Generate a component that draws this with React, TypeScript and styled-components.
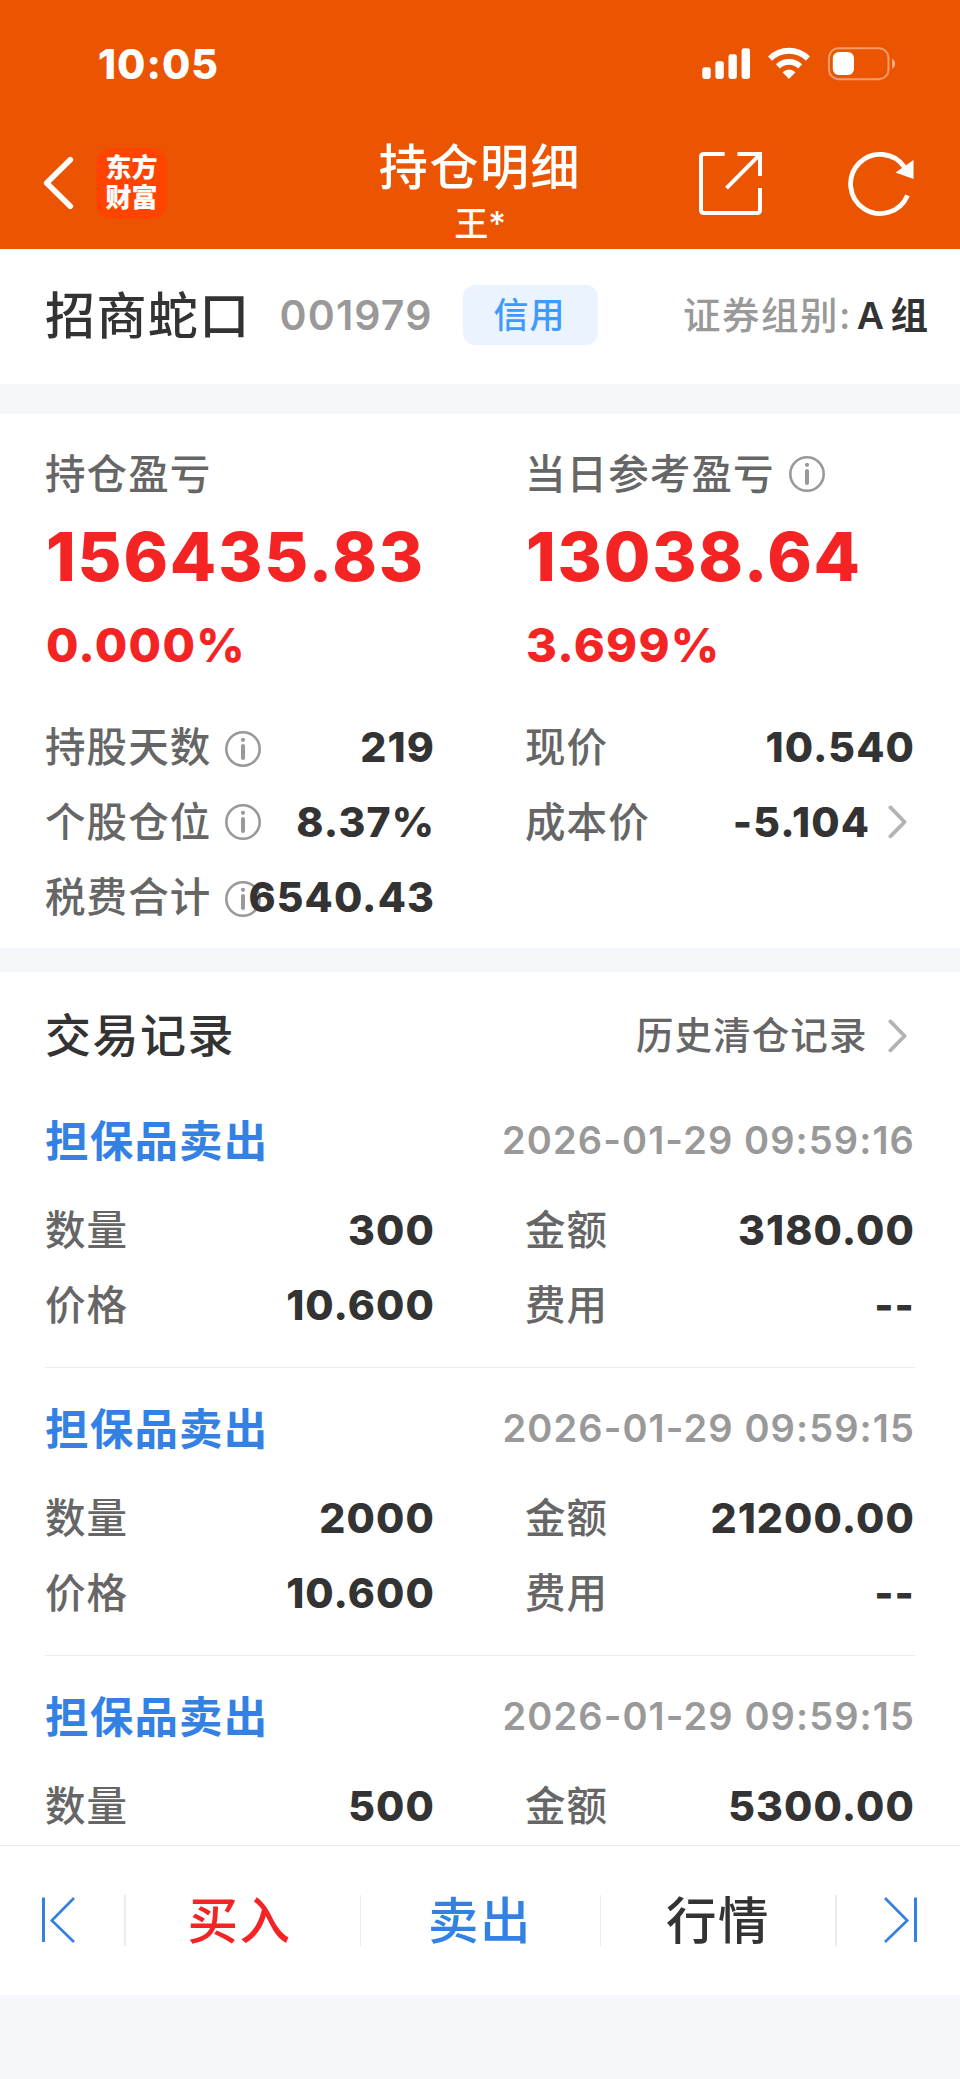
import React from "react";
import styled, { createGlobalStyle } from "styled-components";

const GlobalStyle = createGlobalStyle`
  * { box-sizing: border-box; }
  body {
    margin: 0;
    background: #f6f7fa;
    font-family: Inter, "Noto Sans CJK SC", sans-serif;
    color: #333333;
  }
  svg { display: block; flex: none; }
`;

const Screen = styled.div`
  width: 960px;
  height: 2079px;
  display: flex;
  flex-direction: column;
  overflow: hidden;
`;

/* ---------- header ---------- */

const Header = styled.header`
  flex: none;
  height: 249px;
  background: #eb5502;
  color: #ffffff;
`;

const StatusBar = styled.div`
  height: 128px;
  display: flex;
  align-items: center;
  justify-content: space-between;
  padding: 0 64px 0 98px;
`;

const Clock = styled.span`
  font-size: 41px;
  line-height: 60px;
  font-weight: 800;
  letter-spacing: 1px;
`;

const NavBar = styled.div`
  height: 121px;
  display: grid;
  grid-template-columns: 1fr auto 1fr;
  padding: 0 45px 0 41px;
`;

const NavSide = styled.div<{ $end?: boolean }>`
  height: ${(p) => (p.$end ? 112 : 110)}px;
  display: flex;
  align-items: center;
  justify-content: ${(p) => (p.$end ? "flex-end" : "flex-start")};
  gap: ${(p) => (p.$end ? "84px" : "21px")};
`;

const AppLogo = styled.div`
  width: 71px;
  height: 71px;
  padding-bottom: 4px;
  border-radius: 15px;
  background: #ff4400;
  display: flex;
  flex-direction: column;
  align-items: center;
  justify-content: center;
  font: 900 26px/30px "Noto Sans CJK SC", sans-serif;
`;

const TitleBlock = styled.div`
  display: flex;
  flex-direction: column;
  align-items: center;
  padding: 10px 0 0 4px;
`;

const Title = styled.h1`
  margin: 0;
  font-size: 49px;
  line-height: 60px;
  font-weight: 500;
  letter-spacing: 1.6px;
`;

const Subtitle = styled.span`
  font-size: 34px;
  line-height: 51px;
  font-weight: 500;
`;

/* ---------- stock name row ---------- */

const StockRow = styled.section`
  flex: none;
  height: 135px;
  padding: 0 32px 3px 45px;
  background: #ffffff;
  display: flex;
  align-items: center;
`;

const StockName = styled.span`
  padding-top: 2px;
  font-size: 50px;
  line-height: 66px;
  font-weight: 500;
  letter-spacing: 1.4px;
`;

const StockCode = styled.span`
  margin-left: 29px;
  width: 154px;
  font-size: 41px;
  line-height: 60px;
  font-weight: 600;
  letter-spacing: 1.1px;
  color: #999999;
`;

const Tag = styled.span`
  margin-left: auto;
  width: 135px;
  height: 60px;
  border-radius: 12px;
  background: #ebf3ff;
  color: #3d9aff;
  font-size: 35px;
  line-height: 61px;
  font-weight: 500;
  letter-spacing: 1px;
  padding-right: 2px;
  text-align: center;
`;

const Group = styled.span`
  width: 245px;
  margin-left: 85px;
  padding-top: 1px;
  display: flex;
  justify-content: space-between;
  white-space: nowrap;
  font-size: 37.5px;
  line-height: 60px;
  word-spacing: -3px;
`;

const GroupLabel = styled.span`
  color: #999999;
  font-weight: 500;
  letter-spacing: 1.5px;
`;

const GroupName = styled.span`
  font-weight: 600;
`;

/* ---------- summary ---------- */

const Band = styled.div<{ $height: number }>`
  flex: none;
  height: ${(p) => p.$height}px;
  background: #f6f7fa;
`;

const Summary = styled.section`
  flex: none;
  height: 534px;
  padding: 20px 45px 0;
  background: #ffffff;
`;

const Columns = styled.div`
  display: grid;
  grid-template-columns: 390px 390px;
  column-gap: 90px;
`;

const Profit = styled.div`
  display: flex;
  flex-direction: column;
  height: 275px;
`;

const ProfitAmount = styled.span`
  padding-left: 1px;
  font-size: 67.5px;
  line-height: 86px;
  font-weight: 800;
  letter-spacing: 1.8px;
  color: #f52424;
`;

const ProfitRate = styled.span`
  padding-left: 1px;
  font-size: 47px;
  line-height: 89px;
  font-weight: 800;
  letter-spacing: 1.3px;
  color: #f52424;
`;

const Row = styled.div`
  height: 75px;
  display: flex;
  align-items: center;
  justify-content: space-between;
`;

const Label = styled.span`
  display: flex;
  align-items: center;
  height: 80px;
  padding-top: 2px;
  font-size: 40.5px;
  line-height: 60px;
  font-weight: 500;
  letter-spacing: 1.1px;
  white-space: nowrap;
  color: #666666;
`;

const InfoSlot = styled.span<{ $shift: number }>`
  margin: 0 -36px 0 14px;
  transform: translateY(${(p) => p.$shift}px);
`;

const Value = styled.span`
  position: relative;
  margin-left: auto;
  font-size: 41px;
  line-height: 60px;
  font-weight: 800;
  letter-spacing: 1.1px;
  white-space: nowrap;
`;

const ChevronSlot = styled.span<{ $gap: number }>`
  margin: 0 8px 0 ${(p) => p.$gap}px;
`;

/* ---------- records ---------- */

const Records = styled.section`
  flex: 1;
  min-height: 0;
  overflow: hidden;
  padding: 0 45px;
  background: #ffffff;
`;

const RecordsHead = styled.div`
  height: 108px;
  padding-top: 18px;
  display: flex;
  align-items: center;
  justify-content: space-between;
`;

const SectionTitle = styled.h2`
  margin: 0;
  font-size: 46px;
  line-height: 60px;
  font-weight: 500;
  letter-spacing: 1.5px;
`;

const HistoryLink = styled.a`
  display: flex;
  align-items: center;
  padding-top: 2px;
  font-size: 37.5px;
  line-height: 60px;
  font-weight: 500;
  letter-spacing: 1.1px;
  color: #666666;
`;

const RecordItem = styled.article`
  height: 288px;
  padding-top: 8px;
  border-bottom: 1px solid #ededed;
`;

const RecordTop = styled.div`
  height: 104px;
  display: flex;
  align-items: center;
  justify-content: space-between;
`;

const Action = styled.span`
  padding-top: 2px;
  font-size: 43.5px;
  line-height: 60px;
  font-weight: 700;
  letter-spacing: 1.2px;
  color: #3381e3;
`;

const Time = styled.span`
  font-size: 38px;
  line-height: 60px;
  font-weight: 600;
  letter-spacing: 1.1px;
  color: #999999;
  white-space: nowrap;
`;

/* ---------- bottom bar ---------- */

const BottomBar = styled.nav`
  flex: none;
  height: 150px;
  border-top: 1px solid #ebebeb;
  background: #ffffff;
  display: flex;
  align-items: center;
  padding-bottom: 1px;
`;

const PageButton = styled.button<{ $last?: boolean }>`
  flex: none;
  width: 124px;
  height: 51px;
  border: 0;
  background: none;
  display: flex;
  align-items: center;
  justify-content: ${(p) => (p.$last ? "flex-end" : "flex-start")};
  padding: ${(p) => (p.$last ? "0 44px 0 0" : "0 0 0 42px")};
`;

const Divider = styled.i<{ $w: number }>`
  flex: none;
  width: ${(p) => p.$w}px;
  height: 51px;
  background: #ececec;
`;

const TradeButton = styled.button<{ $color: string; $w: number; $nudge: number }>`
  flex: none;
  width: ${(p) => p.$w}px;
  border: 0;
  padding: 2px ${(p) => p.$nudge}px 0 0;
  background: none;
  font-family: inherit;
  font-size: 50.5px;
  line-height: 70px;
  font-weight: 500;
  letter-spacing: 1.5px;
  color: ${(p) => p.$color};
`;

const HomeArea = styled.footer`
  flex: none;
  height: 84px;
  background: #f6f7fa;
`;

/* ---------- icons ---------- */

const StatusIcons = () => (
  <svg width="196" height="34" viewBox="700 47 196 34" fill="#fff">
    <rect x="702.3" y="67.2" width="8.4" height="11.8" rx="2.4" />
    <rect x="715.4" y="61.2" width="8.4" height="17.8" rx="2.4" />
    <rect x="728.5" y="54.3" width="8.4" height="24.7" rx="2.4" />
    <rect x="741.6" y="48.2" width="8.4" height="30.8" rx="2.4" />
    <g fill="none" stroke="#fff" strokeWidth="5.8">
      <path d="M770.1 58.6A26.7 26.7 0 0 1 807.9 58.6" />
      <path d="M777.9 66.4A15.7 15.7 0 0 1 800.1 66.4" />
    </g>
    <path d="M789 79L782.5 72.3Q789 66.6 795.5 72.3Z" />
    <rect x="829" y="48.3" width="59.5" height="30.9" rx="9.5" fill="none" stroke="#fff" strokeOpacity=".42" strokeWidth="2" />
    <rect x="832.8" y="52.1" width="21.2" height="22.9" rx="6" />
    <path d="M892 58.7Q895.2 60.5 895.2 63.7T892 68.7Z" fillOpacity=".5" />
  </svg>
);

const BackIcon = () => (
  <svg width="34" height="56" viewBox="41 155 34 56" fill="none" stroke="#fff" strokeWidth="5.6" strokeLinecap="round" strokeLinejoin="round">
    <path d="M70.3 159.8L46.7 183L70.3 206.2" />
  </svg>
);

const ShareIcon = () => (
  <svg width="64" height="64" viewBox="699 152 64 64" fill="none" stroke="#fff" strokeWidth="4">
    <path d="M724.6 154H704Q701 154 701 157V210Q701 213 704 213H757Q760 213 760 210V188" />
    <path d="M737.5 154H760V176" />
    <path d="M726.5 188.2L759 155.4" />
  </svg>
);

const RefreshIcon = () => (
  <svg width="68" height="68" viewBox="847 150 68 68" fill="none">
    <path d="M907.5 195.4A29.6 29.6 0 1 1 904.8 167.5" stroke="#fff" strokeWidth="4.8" />
    <path d="M913.5 160V179L895.5 172.5Z" fill="#fff" />
  </svg>
);

const InfoIcon = () => (
  <svg width="36" height="36" viewBox="0 0 36 36" fill="none" stroke="#999">
    <circle cx="18" cy="18" r="16.7" strokeWidth="2.6" />
    <circle cx="18" cy="8.8" r="2.1" fill="#999" stroke="none" />
    <path d="M18 15V27" strokeWidth="4" strokeLinecap="round" />
  </svg>
);

const Chevron = () => (
  <svg width="19" height="34" viewBox="0 0 19 34" fill="none" stroke="#b3b3b3" strokeWidth="3.8" strokeLinecap="round" strokeLinejoin="round">
    <path d="M2.4 2.4L16.6 17L2.4 31.3" />
  </svg>
);

const PageIcon = ({ flip }: { flip?: boolean }) => (
  <svg width="34" height="46" viewBox="0 0 34 46" fill="none" stroke="#3381e3" strokeWidth="3">
    <g transform={flip ? "matrix(-1 0 0 1 34 0)" : undefined}>
      <path d="M1.5 .5V45" />
      <path d="M32 1L9.8 23.5L32 45" strokeWidth="2.7" />
    </g>
  </svg>
);

/* ---------- composition ---------- */

type FieldProps = { label: string; value: string; info?: number; link?: boolean };

const Field = ({ label, value, info, link }: FieldProps) => (
  <Row>
    <Label>
      {label}
      {info !== undefined && (
        <InfoSlot $shift={info}>
          <InfoIcon />
        </InfoSlot>
      )}
    </Label>
    <Value>{value}</Value>
    {link && (
      <ChevronSlot $gap={18}>
        <Chevron />
      </ChevronSlot>
    )}
  </Row>
);

type TradeRecord = { time: string; qty: string; amount: string; price?: string };

const records: TradeRecord[] = [
  { time: "2026-01-29 09:59:16", qty: "300", amount: "3180.00", price: "10.600" },
  { time: "2026-01-29 09:59:15", qty: "2000", amount: "21200.00", price: "10.600" },
  { time: "2026-01-29 09:59:15", qty: "500", amount: "5300.00" },
];

export default function App() {
  return (
    <Screen>
      <GlobalStyle />
      <Header>
        <StatusBar>
          <Clock>10:05</Clock>
          <StatusIcons />
        </StatusBar>
        <NavBar>
          <NavSide>
            <BackIcon />
            <AppLogo>
              <span>东方</span>
              <span>财富</span>
            </AppLogo>
          </NavSide>
          <TitleBlock>
            <Title>持仓明细</Title>
            <Subtitle>王*</Subtitle>
          </TitleBlock>
          <NavSide $end>
            <ShareIcon />
            <RefreshIcon />
          </NavSide>
        </NavBar>
      </Header>

      <StockRow>
        <StockName>招商蛇口</StockName>
        <StockCode>001979</StockCode>
        <Tag>信用</Tag>
        <Group>
          <GroupLabel>证券组别:</GroupLabel>
          <GroupName>A 组</GroupName>
        </Group>
      </StockRow>

      <Band $height={30} />

      <Summary>
        <Columns>
          <Profit>
            <Label>持仓盈亏</Label>
            <ProfitAmount>156435.83</ProfitAmount>
            <ProfitRate>0.000%</ProfitRate>
          </Profit>
          <Profit>
            <Label>
              当日参考盈亏
              <InfoSlot $shift={-1}>
                <InfoIcon />
              </InfoSlot>
            </Label>
            <ProfitAmount>13038.64</ProfitAmount>
            <ProfitRate>3.699%</ProfitRate>
          </Profit>
        </Columns>
        <Columns>
          <div>
            <Field label="持股天数" value="219" info={1} />
            <Field label="个股仓位" value="8.37%" info={-1} />
            <Field label="税费合计" value="6540.43" info={1} />
          </div>
          <div>
            <Field label="现价" value="10.540" />
            <Field label="成本价" value="-5.104" link />
          </div>
        </Columns>
      </Summary>

      <Band $height={24} />

      <Records>
        <RecordsHead>
          <SectionTitle>交易记录</SectionTitle>
          <HistoryLink>
            历史清仓记录
            <ChevronSlot $gap={20.5}>
              <Chevron />
            </ChevronSlot>
          </HistoryLink>
        </RecordsHead>
        {records.map((r, i) => (
          <RecordItem key={i}>
            <RecordTop>
              <Action>担保品卖出</Action>
              <Time>{r.time}</Time>
            </RecordTop>
            <Columns>
              <Field label="数量" value={r.qty} />
              <Field label="金额" value={r.amount} />
              {r.price && (
                <>
                  <Field label="价格" value={r.price} />
                  <Field label="费用" value="--" />
                </>
              )}
            </Columns>
          </RecordItem>
        ))}
      </Records>

      <BottomBar>
        <PageButton>
          <PageIcon />
        </PageButton>
        <Divider $w={2} />
        <TradeButton $color="#f52424" $w={234} $nudge={7}>买入</TradeButton>
        <Divider $w={1} />
        <TradeButton $color="#3381e3" $w={239} $nudge={1}>卖出</TradeButton>
        <Divider $w={1} />
        <TradeButton $color="#333333" $w={234} $nudge={-0}>行情</TradeButton>
        <Divider $w={2} />
        <PageButton $last>
          <PageIcon flip />
        </PageButton>
      </BottomBar>
      <HomeArea />
    </Screen>
  );
}
